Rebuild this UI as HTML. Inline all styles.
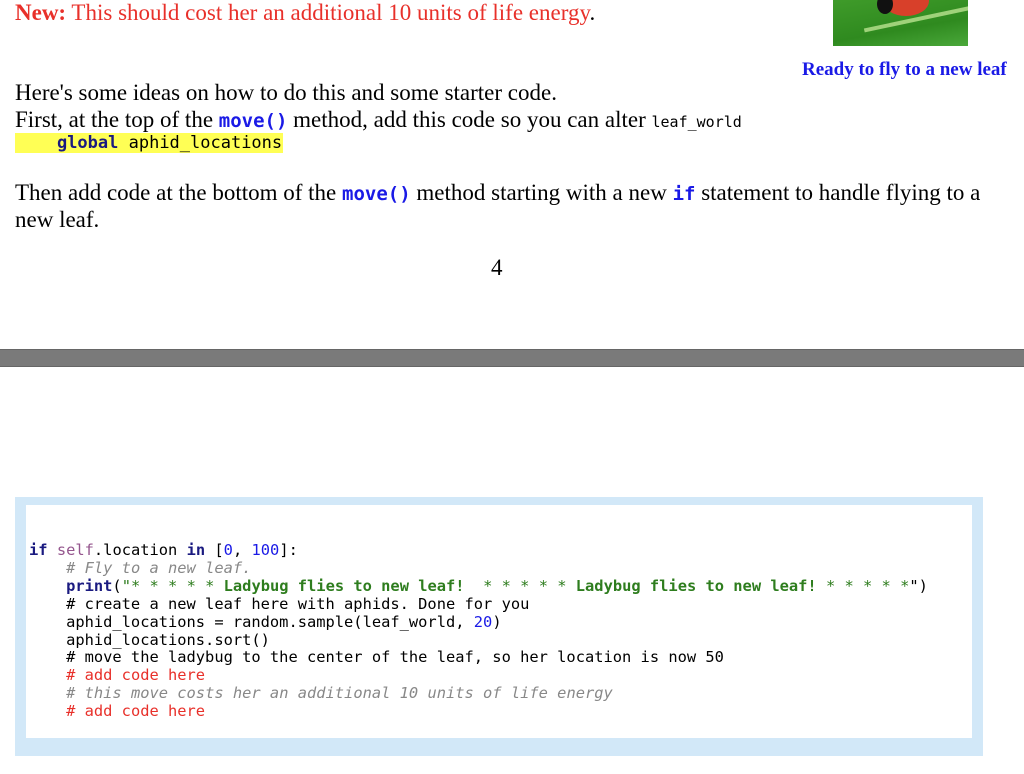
<!DOCTYPE html>
<html><head><style>
body{margin:0;width:1024px;height:774px;background:#fff;position:relative;overflow:hidden;font-family:"Liberation Serif",serif;font-size:23px;color:#000}
.a{position:absolute;white-space:nowrap}
.m{font-family:"DejaVu Sans Mono","Liberation Mono",monospace}
.b{color:#1a1ae6}
</style></head><body>
<div class="a" style="left:15px;top:0px;color:#e8302a"><b>New:</b> This should cost her an additional 10 units of life energy<span style="color:#000">.</span></div>
<div class="a" style="left:833px;top:0;width:135px;height:46px;background:linear-gradient(170deg,#3f9b2a,#2f8a1f 60%,#4aa83a);overflow:hidden">
<div style="position:absolute;left:50px;top:-14px;width:46px;height:30px;border-radius:50%;background:#d8402a"></div>
<div style="position:absolute;left:44px;top:-6px;width:16px;height:20px;border-radius:50%;background:#111"></div>
<div style="position:absolute;left:30px;top:16px;width:120px;height:4px;background:#9fd27a;transform:rotate(-12deg)"></div>
</div>
<div class="a b" style="left:802px;top:59px;font-size:19px;font-weight:bold">Ready to fly to a new leaf</div>
<div class="a" style="left:15px;top:80px">Here's some ideas on how to do this and some starter code.</div>
<div class="a" style="left:15px;top:107px">First, at the top of the <span class="m b" style="font-size:19px;font-weight:bold">move()</span> method, add this code so you can alter <span class="m" style="font-size:15px">leaf_world</span></div>
<div class="a m" style="left:15px;top:133px;background:#ffff55;font-size:17px;padding:0 1px;white-space:pre;color:#000">    <b style="color:#1a1a80">global</b> aphid_locations</div>
<div class="a" style="left:15px;top:180px">Then add code at the bottom of the <span class="m b" style="font-size:19px;font-weight:bold">move()</span> method starting with a new <span class="m b" style="font-size:19px"><b>if</b></span> statement to handle flying to a</div>
<div class="a" style="left:15px;top:207px">new leaf.</div>
<div class="a" style="left:491px;top:255px">4</div>
<div class="a" style="left:0;top:349px;width:1024px;height:18px;background:#7a7a7a;border-top:1px solid #666;border-bottom:1px solid #666;box-sizing:border-box"></div>
<div class="a" style="left:15px;top:497px;width:968px;height:259px;background:#d2e8f8"></div>
<div class="a" style="left:26px;top:505px;width:946px;height:233px;background:#fff"></div>
<pre class="a m" style="left:29px;top:542px;margin:0;font-size:15.4px;line-height:17.9px;color:#000;white-space:pre"><b style="color:#1a1a80">if</b> <span style="color:#94558d">self</span>.location <b style="color:#1a1a80">in</b> [<span style="color:#1a1ae6">0</span>, <span style="color:#1a1ae6">100</span>]:
    <i style="color:#888"># Fly to a new leaf.</i>
    <b style="color:#1a1a80">print</b>(<span style="color:#2e7d1e">"* * * * * <b>Ladybug flies to new leaf!</b>  * * * * * <b>Ladybug flies to new leaf!</b> * * * * *</span>")
    # create a new leaf here with aphids. Done for you
    aphid_locations = random.sample(leaf_world, <span style="color:#1a1ae6">20</span>)
    aphid_locations.sort()
    # move the ladybug to the center of the leaf, so her location is now 50
    <span style="color:#e8302a"># add code here</span>
    <i style="color:#888"># this move costs her an additional 10 units of life energy</i>
    <span style="color:#e8302a"># add code here</span></pre>
</body></html>
